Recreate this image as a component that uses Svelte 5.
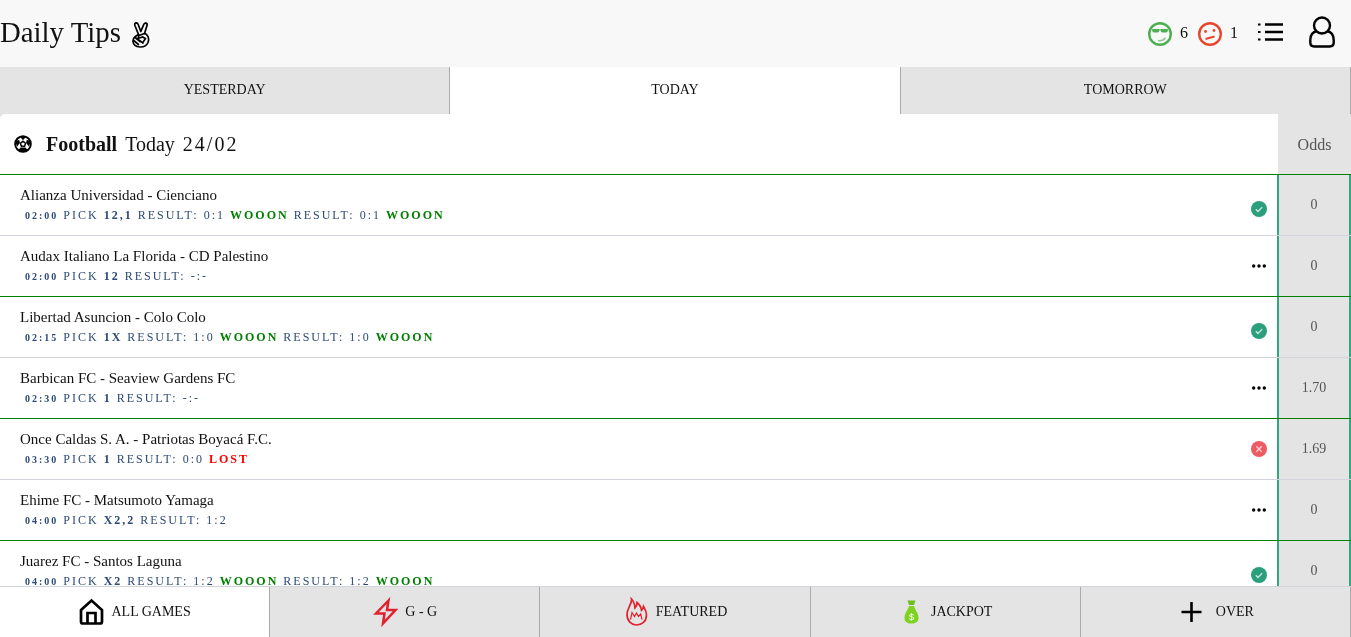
<script>
  const rows = [
    { teams: 'Alianza Universidad - Cienciano', time: '02:00', pick: '12,1', result: '0:1', status: 'won', odds: '0', double: true },
    { teams: 'Audax Italiano La Florida - CD Palestino', time: '02:00', pick: '12', result: '-:-', status: 'open', odds: '0' },
    { teams: 'Libertad Asuncion - Colo Colo', time: '02:15', pick: '1X', result: '1:0', status: 'won', odds: '0', double: true },
    { teams: 'Barbican FC - Seaview Gardens FC', time: '02:30', pick: '1', result: '-:-', status: 'open', odds: '1.70' },
    { teams: 'Once Caldas S. A. - Patriotas Boyacá F.C.', time: '03:30', pick: '1', result: '0:0', status: 'lost', odds: '1.69' },
    { teams: 'Ehime FC - Matsumoto Yamaga', time: '04:00', pick: 'X2,2', result: '1:2', status: 'open', odds: '0' },
    { teams: 'Juarez FC - Santos Laguna', time: '04:00', pick: 'X2', result: '1:2', status: 'won', odds: '0', double: true }
  ];
</script>

<div class="page">
  <header class="top">
    <div class="brand">
      <h1>Daily Tips</h1>
      <svg class="peace" viewBox="0 0 18 26" width="18" height="26">
        <g fill="none" stroke="#000" stroke-width="1.700" stroke-linejoin="round" stroke-linecap="round">
          <path d="M6.500 12.500L2.800 3.200Q2.500 1 4.300 .9 5.600.9 6.200 2.500L8.800 9.500 11.800 2.300Q12.600.7 14 1.100 15.600 1.700 15 3.400L12.500 11.500" />
          <path d="M6.500 12.500L3.300 14.500Q.8 16.500 1 19.500 1.500 24.500 8 25 14 25.200 16 20.500 17.500 16 15.300 13.500 14 11.500 12.500 11.500L7 13.500 6 16.500 10.500 15" />
          <path d="M3.200 15.500L8 19.500M1.700 18.500L6.500 22.500M6 17.500L11 21M10.500 15L13.500 16.500 11.500 19.500" />
        </g>
      </svg>
    </div>
    <div class="tools">
      <svg viewBox="0 0 24 24" width="24" height="24">
        <circle cx="12" cy="12" r="10.800" fill="none" stroke="#4caf50" stroke-width="2.400" />
        <path d="M4 8h16" stroke="#4caf50" stroke-width="1.200" />
        <path d="M4.500 7h6.500v3q-3.200 1.200-6.500 0zM13 7h6.500v3q-3.200 1.200-6.500 0z" fill="#4caf50" />
        <path d="M10 18.500q5 .8 7.500-2.800" fill="none" stroke="#8bc98e" stroke-width="1.500" />
      </svg>
      <span class="count">6</span>
      <svg viewBox="0 0 24 24" width="24" height="24">
        <circle cx="12" cy="12" r="10.800" fill="none" stroke="#e8452c" stroke-width="2.400" />
        <circle cx="7.500" cy="9.500" r="1.400" fill="#e8452c" />
        <circle cx="16" cy="8.500" r="1.400" fill="#e8452c" />
        <path d="M7.500 17l9-2.500" fill="none" stroke="#e8452c" stroke-width="2.200" />
      </svg>
      <span class="count">1</span>
      <svg class="list" viewBox="0 0 25 18" width="25" height="18">
        <path d="M7 1.500h18M7 9h18M7 16.500h18" stroke="#000" stroke-width="2.500" fill="none" />
        <path d="M0 .5h2.500v2h-2.500zM0 8h2.500v2h-2.500zM0 15.500h2.500v2h-2.500z" fill="#000" />
      </svg>
      <svg class="user" viewBox="0 0 26 32" width="26" height="32">
        <circle cx="13" cy="9.500" r="8" fill="none" stroke="#000" stroke-width="2.400" />
        <path d="M8 15C3.500 16 1.300 19.500 1.300 24v2.500q0 4 4 4h15.400q4 0 4-4V24c0-4.500-2.200-8-6.700-9" fill="none" stroke="#000" stroke-width="2.400" />
      </svg>
    </div>
  </header>

  <nav class="days">
    <div class="day">YESTERDAY</div>
    <div class="day active">TODAY</div>
    <div class="day">TOMORROW</div>
  </nav>

  <main class="card">
    <div class="card-head">
      <div class="title">
        <svg class="ball" viewBox="0 0 18 18" width="18" height="18">
          <circle cx="9" cy="9" r="7.800" fill="#fff" stroke="#000" stroke-width="2" />
          <path d="M9 6.300l2.600 1.900-1 3H7.400l-1-3z" fill="#fff" stroke="#000" stroke-width="1.500" />
          <path d="M5.800 1.500h6.400L9 5.200zM1 6.500l4.200-1.700.7 3-2.600 3.800zM17 6.500l-4.200-1.700-.7 3 2.600 3.800zM4.500 15l2-2.400h5l2 2.400-4.500 2z" fill="#000" />
        </svg>
        <b>Football</b>
        <span>Today</span>
        <span class="date">24/02</span>
      </div>
      <div class="odds-head">Odds</div>
    </div>
    {#each rows as row, i}
      <div class="row" class:alt={i % 2 === 1}>
        <div class="info">
          <div class="teams">{row.teams}</div>
          <div class="meta">
            <b class="time">{row.time}</b> PICK <b>{row.pick}</b> RESULT: {row.result}
            {#if row.status === 'won'}<b class="won">WOOON</b>{/if}
            {#if row.status === 'lost'}<b class="lost">LOST</b>{/if}
            {#if row.double}RESULT: {row.result} <b class="won">WOOON</b>{/if}
          </div>
        </div>
        <div class="state" class:low={row.status === 'won'}>
          {#if row.status === 'won'}
            <svg viewBox="0 0 16 16" width="16" height="16">
              <circle cx="8" cy="8" r="8" fill="#2b9f7c" />
              <path d="M4.800 8.300l2.200 2.200 4.200-4.400" fill="none" stroke="#cfeae0" stroke-width="1.300" />
            </svg>
          {:else if row.status === 'lost'}
            <svg viewBox="0 0 16 16" width="16" height="16">
              <circle cx="8" cy="8" r="8" fill="#ef5b62" />
              <path d="M5.300 5.300l5.400 5.400M10.700 5.300l-5.400 5.400" fill="none" stroke="#fbd5d7" stroke-width="1.300" />
            </svg>
          {:else}
            <svg viewBox="0 0 16 16" width="16" height="16">
              <circle cx="2.700" cy="8" r="1.700" />
              <circle cx="8" cy="8" r="1.700" />
              <circle cx="13.300" cy="8" r="1.700" />
            </svg>
          {/if}
        </div>
        <div class="odds">{row.odds}</div>
      </div>
    {/each}
  </main>

  <footer class="tabs">
    <div class="tab active">
      <svg viewBox="-1.500 0 24 26" width="24" height="26">
        <path d="M1.500 11L12 1.500 22.500 11v11.500q0 2-2 2h-17q-2 0-2-2z" fill="none" stroke="#000" stroke-width="2.700" />
        <path d="M8 24.500V14h8v10.500" fill="none" stroke="#000" stroke-width="2.700" />
      </svg>
      ALL GAMES
    </div>
    <div class="tab">
      <svg viewBox="-1.500 0 24 26" width="24" height="26">
        <path d="M15 1.500L2.500 14.500h8.500l-1.500 10L22 11h-8.500z" fill="none" stroke="#e3202e" stroke-width="2.500" />
      </svg>
      G - G
    </div>
    <div class="tab">
      <svg viewBox="-1.500 0 24 28" width="24" height="28">
        <path d="M7 1c.8 5-4.500 9-4.500 15.500C2.500 23 7 27 12 27s10-3.500 10-10c0-4-1.700-6-3-8.500-.4 1.800-1 3-2 3.800C16.500 8.500 14.500 6 12.500 4.500 12.500 7 11.500 9 10.500 10 10.200 6.500 9 3 7 1z" fill="none" stroke="#e3202e" stroke-width="1.700" />
        <path d="M6 21.500l1.500-7 2.500 4 2-3.500 2 3.500 2.200-2.500 1.300 5.500" fill="none" stroke="#e3202e" stroke-width="1.200" />
      </svg>
      FEATURED
    </div>
    <div class="tab">
      <svg viewBox="-1.500 0 24 24" width="24" height="24">
        <path d="M8 .5h8L14.500 5h-5z" fill="#6fbf1c" />
        <path d="M9.500 6h5c1 4 4.500 7 4.500 12 0 4-3 5.500-7 5.500S5 22 5 18c0-5 3.500-8 4.500-12z" fill="#7ed321" />
        <text x="12" y="20" font-size="9" font-family="Liberation Sans" text-anchor="middle" fill="#fff">$</text>
      </svg>
      JACKPOT
    </div>
    <div class="tab">
      <svg viewBox="-1.500 0 30 20" width="30" height="20">
        <path d="M13 0v20M3 10h20" stroke="#000" stroke-width="2.600" fill="none" />
      </svg>
      OVER
    </div>
  </footer>
</div>

<style>
  :global(body) {
    margin: 0;
    background: #e4e4e4;
    font-family: "Liberation Serif", serif;
    color: #111;
  }
  .page {
    height: 100vh;
    display: flex;
    flex-direction: column;
    overflow: hidden;
    will-change: transform;
  }
  .top {
    flex: 0 0 67px;
    display: flex;
    align-items: center;
    justify-content: space-between;
    background: #f8f8f8;
  }
  .brand {
    display: flex;
    align-items: center;
    gap: 11px;
  }
  h1 {
    margin: 0 0 3px;
    font-size: 28.800px;
    font-weight: 400;
  }
  .peace {
    margin-top: 3px;
  }
  .tools {
    display: flex;
    align-items: center;
    padding-right: 16px;
    padding-top: 1px;
  }
  .count {
    margin: 0 10px 3px 8px;
    font-size: 16px;
  }
  .list {
    margin: 0 26px 4px 10px;
  }
  .user {
    margin-bottom: 5px;
  }
  .days {
    flex: 0 0 47px;
    display: grid;
    grid-template-columns: repeat(3, 1fr);
    background: #e4e4e4;
  }
  .day {
    display: flex;
    align-items: center;
    justify-content: center;
    font-size: 14px;
    padding-bottom: 2px;
    border-right: 1px solid #aaa;
  }
  .day.active {
    background: #fff;
  }
  .card {
    flex: 1;
    min-height: 0;
    overflow: hidden;
    background: #fff;
    border-radius: 5px 5px 0 0;
  }
  .card-head {
    height: 60px;
    display: flex;
    border-bottom: 1px solid #008000;
  }
  .title {
    flex: 1;
    display: flex;
    align-items: center;
    font-size: 20px;
    padding-left: 14px;
    gap: 8px;
  }
  .ball {
    margin-right: 6px;
  }
  .date {
    letter-spacing: 2px;
  }
  .odds-head {
    width: 73px;
    display: flex;
    align-items: center;
    justify-content: center;
    background: #e4e4e4;
    color: #555;
    font-size: 16px;
    padding-top: 1px;
  }
  .row {
    height: 60px;
    display: flex;
    border-bottom: 1px solid #008000;
  }
  .row:not(.alt) {
    border-bottom-color: #d3d3dc;
  }
  .info {
    flex: 1;
    padding: 10px 0 0 20px;
    min-width: 0;
  }
  .teams {
    font-size: 15px;
    line-height: 20px;
  }
  .meta {
    margin: 2px 0 0 5px;
    font-size: 12px;
    line-height: 16px;
    letter-spacing: 2px;
    color: #2c4a75;
    white-space: nowrap;
  }
  .time {
    font-size: 10px;
  }
  .won {
    color: #008000;
  }
  .lost {
    color: #f00;
  }
  .state {
    width: 38px;
    padding: 22px 10.500px 0 0;
    box-sizing: border-box;
    display: flex;
    justify-content: flex-end;
    align-items: flex-start;
  }
  .state.low {
    padding-top: 26px;
  }
  .odds {
    width: 70px;
    background: #e4e4e4;
    border-left: 2px solid #2fa77f;
    border-right: 2px solid #2fa77f;
    color: #555;
    font-size: 14px;
    display: flex;
    align-items: center;
    justify-content: center;
    padding-bottom: 1px;
  }
  .tabs {
    flex: 0 0 50px;
    display: grid;
    grid-template-columns: repeat(5, 1fr);
    border-top: 1px solid #d3d3dc;
    background: #e4e4e4;
  }
  .tab {
    display: flex;
    align-items: center;
    justify-content: center;
    gap: 9px;
    font-size: 14px;
    border-right: 1px solid #aaa;
  }
  .tab svg {
    overflow: visible;
  }
  .tab.active {
    background: #fff;
  }
</style>
